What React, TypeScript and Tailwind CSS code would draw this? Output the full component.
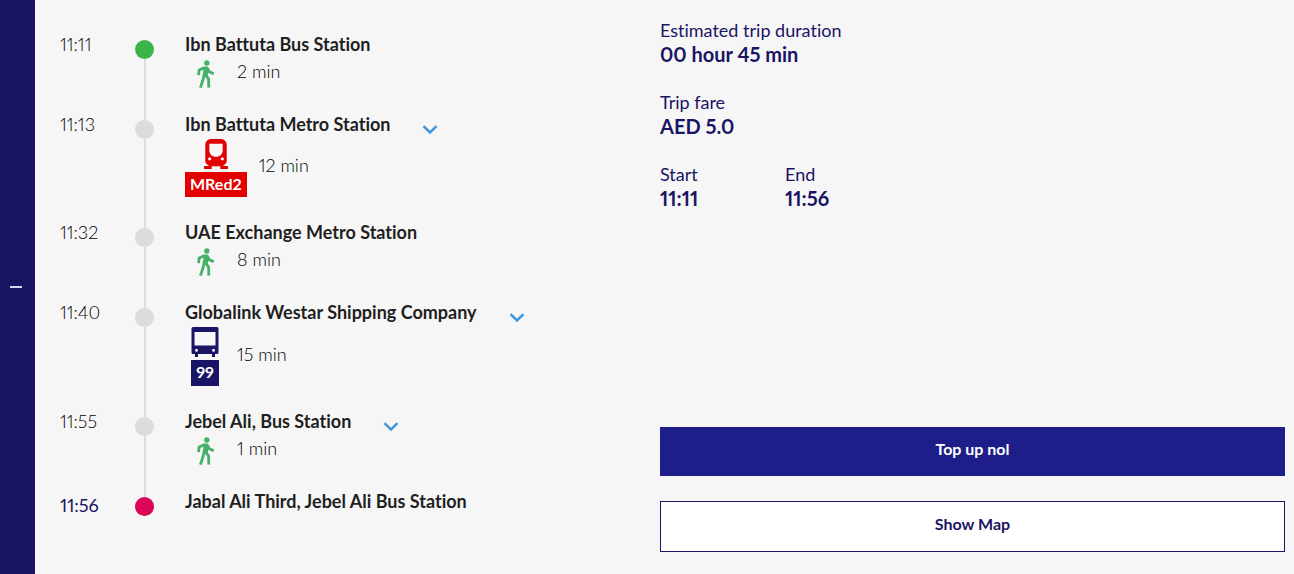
import { useState } from "react";

type Mode = "walk" | "metro" | "bus";

interface Stop {
  time: string;
  name: string;
  mode?: Mode;
  duration?: string;
  line?: string;
  expandable?: boolean;
}

const stops: Stop[] = [
  { time: "11:11", name: "Ibn Battuta Bus Station", mode: "walk", duration: "2 min" },
  {
    time: "11:13",
    name: "Ibn Battuta Metro Station",
    mode: "metro",
    duration: "12 min",
    line: "MRed2",
    expandable: true,
  },
  { time: "11:32", name: "UAE Exchange Metro Station", mode: "walk", duration: "8 min" },
  {
    time: "11:40",
    name: "Globalink Westar Shipping Company",
    mode: "bus",
    duration: "15 min",
    line: "99",
    expandable: true,
  },
  {
    time: "11:55",
    name: "Jebel Ali, Bus Station",
    mode: "walk",
    duration: "1 min",
    expandable: true,
  },
  { time: "11:56", name: "Jabal Ali Third, Jebel Ali Bus Station" },
];

function WalkIcon() {
  return (
    <svg width="17" height="28" viewBox="0 0 17 28" fill="none" aria-hidden="true">
      <circle cx="9.800" cy="3" r="2.700" fill="#45b168" />
      <path d="M4 8.600 7.500 6.500h3l1.800 2-1.700 7.500-5-.4 1-6z" fill="#45b168" />
      <path
        d="M7.600 7.600 2.100 10 1.600 15.200M10.300 8.400l2.200 3.500 4.300 1.700M7.200 14.800 5.800 20.500 3.400 27.600M8.400 15l3.200 3.800.2 8.800"
        stroke="#45b168"
        strokeWidth="2.800"
        strokeLinejoin="round"
      />
    </svg>
  );
}

function MetroIcon() {
  return (
    <svg width="24" height="30" viewBox="0 0 24 30" aria-hidden="true">
      <path
        fill="#e30000"
        fillRule="evenodd"
        d="M7.500 0h9c3.800 0 6.200 2.400 6.200 6.200V22c0 1.800-1.300 3.400-3.200 4.200V27H24v3h-7.700v-2.700H7.700V30H0v-3h4.500v-.8C2.600 25.400 1.300 23.800 1.300 22V6.200C1.300 2.400 3.700 0 7.500 0ZM5.300 4.800v6.200c0 4.200 2.700 6.800 6.700 6.800s6.700-2.600 6.700-6.800V4.800Zm.4 13.400a1.600 1.600 0 1 0 0 3.200 1.600 1.600 0 0 0 0-3.200Zm12.600 0a1.600 1.600 0 1 0 0 3.200 1.600 1.600 0 0 0 0-3.200Z"
      />
    </svg>
  );
}

function BusIcon() {
  return (
    <svg width="28" height="30" viewBox="0 0 28 30" aria-hidden="true">
      <path
        fill="#1a1464"
        fillRule="evenodd"
        d="M2 0h24a1.500 1.500 0 0 1 1.500 1.500V25.500a1.500 1.500 0 0 1-1.500 1.500h-2v3h-3v-3H7v3H4v-3H2A1.500 1.500 0 0 1 .5 25.500V1.500A1.500 1.500 0 0 1 2 0ZM3.500 5v13.500h21V5Zm2 16.800a1.500 1.500 0 1 0 0 3 1.500 1.500 0 0 0 0-3Zm17 0a1.500 1.500 0 1 0 0 3 1.500 1.500 0 0 0 0-3Z"
      />
    </svg>
  );
}

function Transport({ stop }: { stop: Stop }) {
  return (
    <div className="mt-[3px] flex items-center gap-3">
      <div className="flex min-w-10 flex-col items-center gap-[3px]">
        <div className="flex h-[30px] items-center">
          {stop.mode === "walk" && <WalkIcon />}
          {stop.mode === "metro" && <MetroIcon />}
          {stop.mode === "bus" && <BusIcon />}
        </div>
        {stop.line && (
          <span
            className={`px-[5px] text-base font-bold text-white ${
              stop.mode === "metro"
                ? "bg-[#e30000] pb-px leading-6"
                : "bg-[#1a1464] pb-0.5 leading-6"
            }`}
          >
            {stop.line}
          </span>
        )}
      </div>
      <span className="pb-1.5 text-lg leading-6 font-light text-black">
        {stop.duration}
      </span>
    </div>
  );
}

function StopRow({ stop, first, last }: { stop: Stop; first: boolean; last: boolean }) {
  const [open, setOpen] = useState(false);

  return (
    <li className="flex">
      <time
        className={`w-[75px] text-lg leading-6 ${
          last ? "pt-1 text-[#1a1464]" : "font-light text-black"
        }`}
      >
        {stop.time}
      </time>
      <div className="flex w-[50px] flex-col items-start">
        <div className={`ml-[9px] h-2 w-0.5 ${first ? "" : "bg-[#dcdcdc]"}`} />
        <div
          className={`size-[19px] rounded-full ${
            first ? "bg-[#3bb44a]" : last ? "bg-[#dc0657]" : "bg-[#dcdcdc]"
          }`}
        />
        {!last && <div className="ml-[9px] w-0.5 flex-1 bg-[#dcdcdc]" />}
      </div>
      <div className="flex-1 pb-[23px]">
        <div className="flex items-end gap-8">
          <h3 className="text-lg leading-6 font-bold">{stop.name}</h3>
          {stop.expandable && (
            <button
              type="button"
              className="pb-0.5"
              aria-label={`Stops after ${stop.name}`}
              aria-expanded={open}
              onClick={() => setOpen(!open)}
            >
              <svg width="16" height="9" viewBox="0 0 16 9" fill="none">
                <path d="m1.500 1.200 6.500 6.300 6.500-6.300" stroke="#4296dc" strokeWidth="2.500" />
              </svg>
            </button>
          )}
        </div>
        {stop.mode && <Transport stop={stop} />}
      </div>
    </li>
  );
}

function Fact({ label, value }: { label: string; value: string }) {
  return (
    <div>
      <dt className="text-lg leading-6">{label}</dt>
      <dd className="text-xl leading-6 font-bold">{value}</dd>
    </div>
  );
}

export default function App() {
  return (
    <main className="flex min-h-screen bg-[#f6f6f6] font-['Lato',sans-serif] text-[#1f1f1f] proportional-nums [font-variant-ligatures:no-common-ligatures]">
      <button
        type="button"
        aria-label="Collapse trip"
        className="flex w-[35px] shrink-0 items-center justify-center bg-[#1a1464] pr-[3px]"
      >
        <span className="h-0.5 w-3 bg-[#d8d6f0]" />
      </button>

      <div className="grid flex-1 grid-cols-2 pr-[9px]">
        <ol className="pt-8 pl-[25px]">
          {stops.map((stop, index) => (
            <StopRow
              key={stop.time}
              stop={stop}
              first={index === 0}
              last={index === stops.length - 1}
            />
          ))}
        </ol>

        <section className="flex flex-col pt-[18px] pb-[22px] text-[#1a1464]">
          <dl className="flex flex-col gap-6">
            <Fact label="Estimated trip duration" value="00 hour 45 min" />
            <Fact label="Trip fare" value="AED 5.0" />
            <div className="grid grid-cols-5">
              <Fact label="Start" value="11:11" />
              <Fact label="End" value="11:56" />
            </div>
          </dl>
          <div className="mt-auto flex flex-col gap-[25px] text-base leading-6 font-bold">
            <button type="button" className="bg-[#1e1e8a] pt-2.5 pb-[15px] text-white">
              Top up nol
            </button>
            <button type="button" className="border border-[#1a1464] bg-white pt-2.5 pb-[15px]">
              Show Map
            </button>
          </div>
        </section>
      </div>
    </main>
  );
}
